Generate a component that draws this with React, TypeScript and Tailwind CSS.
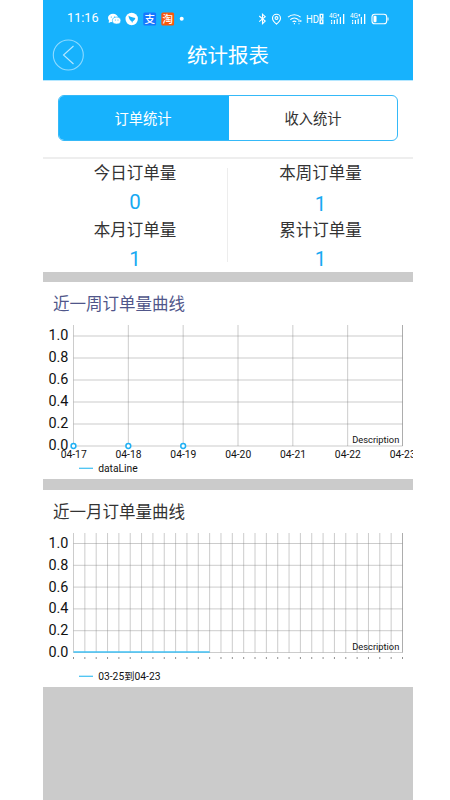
const WEEK_LABELS = ['04-17', '04-18', '04-19', '04-20', '04-21', '04-22', '04-23']
const Y_LABELS = ['1.0', '0.8', '0.6', '0.4', '0.2', '0.0']

const STATS = [
  [
    { label: '今日订单量', value: '0' },
    { label: '本月订单量', value: '1' },
  ],
  [
    { label: '本周订单量', value: '1' },
    { label: '累计订单量', value: '1' },
  ],
]

type ChartProps = {
  columns: number
  firstRow: number
  rowGap: number
  legend: string
  labels?: string[]
  points?: number[]
  lineTo?: number
}

const LEFT = 30.5
const RIGHT = 359.5

function LineChart({ columns, firstRow, rowGap, legend, labels, points, lineTo }: ChartProps) {
  const step = (RIGHT - LEFT) / columns
  const bottom = firstRow + rowGap * 5
  const xs = Array.from({ length: columns + 1 }, (_, i) => LEFT + i * step)

  return (
    <svg width="370" height="154" viewBox="0 0 370 154" className="block">
      <g stroke="#808080" strokeOpacity="0.5" strokeWidth="0.8">
        {xs.map((x) => (
          <line key={x} x1={x} x2={x} y1={0} y2={bottom} />
        ))}
        {Y_LABELS.map((label, i) => (
          <line key={label} x1={LEFT} x2={RIGHT} y1={firstRow + i * rowGap} y2={firstRow + i * rowGap} />
        ))}
        <line x1={RIGHT} x2={RIGHT} y1={0} y2={bottom} />
      </g>

      <g fontSize="14.4" fill="#111" textAnchor="end">
        {Y_LABELS.map((label, i) => (
          <text key={label} x="25.4" y={firstRow + i * rowGap + 4.4}>
            {label}
          </text>
        ))}
      </g>

      {labels
        ? labels.map((label, i) => (
            <text key={label} x={xs[i] + 0.2} y={bottom + 12} fontSize="10.3" fill="#111" textAnchor="middle">
              {label}
            </text>
          ))
        : xs.map((x) => <rect key={x} x={x - 0.5} y={bottom + 5} width="1" height="1" fill="#222" />)}

      <text x="356.3" y={bottom - 3} fontSize="9.3" fill="#111" textAnchor="end">
        Description
      </text>

      {lineTo && <line x1={LEFT} x2={xs[lineTo]} y1={bottom - 0.5} y2={bottom - 0.5} stroke="#3fc0f4" strokeWidth="1.4" />}
      {points?.map((p) => (
        <circle key={p} cx={xs[p]} cy={bottom} r="2.4" fill="#fff" stroke="#1fb0f4" strokeWidth="1.5" />
      ))}

      <line x1="36" x2="50" y1="143.3" y2="143.3" stroke="#4ac3f3" strokeWidth="1.3" />
      <text x="55.2" y="147.3" fontSize="10.3" fill="#111">
        {legend}
      </text>
    </svg>
  )
}

function SignalIcon() {
  return (
    <svg width="16" height="12" viewBox="0 0 16 12" fill="#fff" className="shrink-0">
      <text x="0" y="5.4" fontSize="6.5" textLength="8" lengthAdjust="spacingAndGlyphs">
        4G
      </text>
      <path d="M8.3 1.5h2v1h-2zM9 1h.8v2.4H9zM2 7h1.2v1.5H2zM2 9.3h1.2V11H2zM4.8 7H6v4H4.8zM7.6 5.8h1.2V11H7.6zM10.8 4H12v7h-1.2zM14 1h1.3v10H14z" />
    </svg>
  )
}

function StatusBar() {
  return (
    <div className="flex h-[37px] items-center pl-[24px] text-white">
      <span className="w-[40px] shrink-0 text-[12.7px] leading-none">11:16</span>
      <svg width="82" height="14" viewBox="0 0 82 14" className="shrink-0">
        <g fill="#fff">
          <ellipse cx="6" cy="6" rx="5" ry="4.2" />
          <path d="M2 8l-.3 3L5 9.5z" />
          <ellipse cx="9.6" cy="8.6" rx="4.2" ry="3.5" stroke="#17b2fd" strokeWidth=".6" />
          <circle cx="24.7" cy="7" r="6.2" />
          <circle cx="74.7" cy="6.8" r="2" />
        </g>
        <g fill="#17b2fd">
          <circle cx="4.3" cy="5" r=".6" />
          <circle cx="7.6" cy="5" r=".6" />
          <circle cx="8.3" cy="8" r=".5" />
          <circle cx="11" cy="8" r=".5" />
          <path d="M21.5 3.5c1.7 1.5 3.7 2 6.8 2.4-.4 1.8-1.2 2.7-2.5 3.4l-.6 1.7-.9-1.9c-1.7-1-2.7-3.1-2.8-5.6z" />
        </g>
        <rect x="36.3" y=".6" width="12.8" height="12.8" rx="1.5" fill="#1677ff" />
        <rect x="54.3" y=".6" width="12.8" height="12.8" rx="1.5" fill="#f9590c" />
        <text x="42.7" y="10.8" fontSize="10.5" fontWeight="500" fill="#fff" textAnchor="middle">
          支
        </text>
        <text x="60.7" y="10.8" fontSize="10.5" fontWeight="500" fill="#fff" textAnchor="middle">
          淘
        </text>
      </svg>
      <div className="ml-[69px] flex shrink-0 items-center">
        <svg width="47" height="14" viewBox="0 0 47 14" fill="none" stroke="#fff" strokeWidth="1.1">
          <path d="M1.2 4l6 5L4.5 11.6V2.2L7.2 4.7l-6 5" />
          <path d="M18.5 12.2c-2.6-2.3-4-4-4-6a4 4 0 0 1 8 0c0 2-1.4 3.7-4 6z" />
          <circle cx="18.5" cy="6" r="1.4" />
          <path d="M30 5.2a9.4 9.4 0 0 1 12.6 0M32.3 7.6a6 6 0 0 1 8 0M34.6 9.8a3 3 0 0 1 3.6 0M36.4 11v1.3M41 7.5V10M42.8 8v2M41 11.2v1" />
        </svg>
        <svg width="24" height="14" viewBox="0 0 24 14" fill="#fff" className="shrink-0">
          <text x="1" y="11.3" fontSize="11.5" textLength="13" lengthAdjust="spacingAndGlyphs">
            HD
          </text>
          <path fillRule="evenodd" d="M14.5 1.8h4v5h-4zM15.9 3v2.4h1.2V3zM14.5 7.2h4v5h-4zM15.9 8.4v2.4h1.2V8.4z" />
        </svg>
        <div className="flex gap-[5px]">
          <SignalIcon />
          <SignalIcon />
        </div>
        <svg width="18" height="12" viewBox="0 0 18 12" className="ml-[5px] shrink-0">
          <rect x="1" y="1.3" width="14.7" height="9.4" rx="2.8" fill="none" stroke="#fff" strokeWidth="1.1" />
          <rect x="2.5" y="2.8" width="3" height="6.4" rx="1" fill="#fff" />
          <path d="M17 4.5v3" stroke="#fff" />
        </svg>
      </div>
    </div>
  )
}

export default function App() {
  return (
    <div className="min-h-[800px] w-[450px] bg-white pl-[43px] font-['Roboto','Noto_Sans_CJK_SC',sans-serif]">
      <div className="h-[800px] w-[370px] overflow-hidden bg-[#cbcbcb]">
        <header className="h-[81px] border-b border-[#b5e7ff] bg-[#17b2fd]">
          <StatusBar />
          <div className="grid h-[35px] grid-cols-[60px_1fr_60px] items-center">
            <svg width="32" height="32" viewBox="0 0 32 32" fill="none" className="ml-[9px]">
              <circle cx="16.3" cy="16" r="15" stroke="#8edaff" strokeWidth="1.1" />
              <path d="M21.5 7l-10 9 10 9" stroke="#b7e8ff" strokeWidth="1.1" />
            </svg>
            <h1 className="pt-[3px] text-center text-[20.5px] leading-none text-white">统计报表</h1>
          </div>
        </header>

        <div className="h-[78px] border-b-2 border-[#eee] bg-white px-[15px] pt-[14px]">
          <div className="flex h-[46px] overflow-hidden rounded-md border border-[#35b9f8] text-[14.3px]">
            <button type="button" className="w-[170px] bg-[#17b2fd] pt-[3px] pr-[2px] text-white">
              订单统计
            </button>
            <button type="button" className="flex-1 pt-[3px] text-[#333]">
              收入统计
            </button>
          </div>
        </div>

        <div className="flex h-[113px] bg-white">
          <div className="w-[184px] text-center">
            {STATS[0].map((stat) => (
              <div key={stat.label} className="h-[57px]">
                <p className="pt-[3px] text-[16.5px] leading-6 text-[#333]">{stat.label}</p>
                <p className="pt-1 text-[20.5px] leading-6 text-[#17a9f2]">{stat.value}</p>
              </div>
            ))}
          </div>
          <div className="mt-[9px] h-[94px] w-px bg-[#ededed]" />
          <div className="flex-1 text-center">
            {STATS[1].map((stat, i) => (
              <div key={stat.label} className="h-[57px]">
                <p className="pt-[3px] text-[16.5px] leading-6 text-[#333]">{stat.label}</p>
                <p className={i === 0 ? 'pt-1.5 text-[20.5px] leading-6 text-[#17a9f2]' : 'pt-1 text-[20.5px] leading-6 text-[#17a9f2]'}>
                  {stat.value}
                </p>
              </div>
            ))}
          </div>
        </div>

        <section className="mt-[10px] h-[197px] bg-white">
          <h2 className="h-[43px] pt-[11px] pl-[10px] text-[16.5px] leading-6 text-[#50568a]">近一周订单量曲线</h2>
          <LineChart columns={6} firstRow={11} rowGap={22} legend="dataLine" labels={WEEK_LABELS} points={[0, 1, 2]} />
        </section>

        <section className="mt-[11px] h-[197px] bg-white">
          <h2 className="h-[43px] pt-[11px] pl-[10px] text-[16.5px] leading-6 text-[#333]">近一月订单量曲线</h2>
          <LineChart columns={29} firstRow={10.5} rowGap={21.8} legend="03-25到04-23" lineTo={12} />
        </section>
      </div>
    </div>
  )
}
